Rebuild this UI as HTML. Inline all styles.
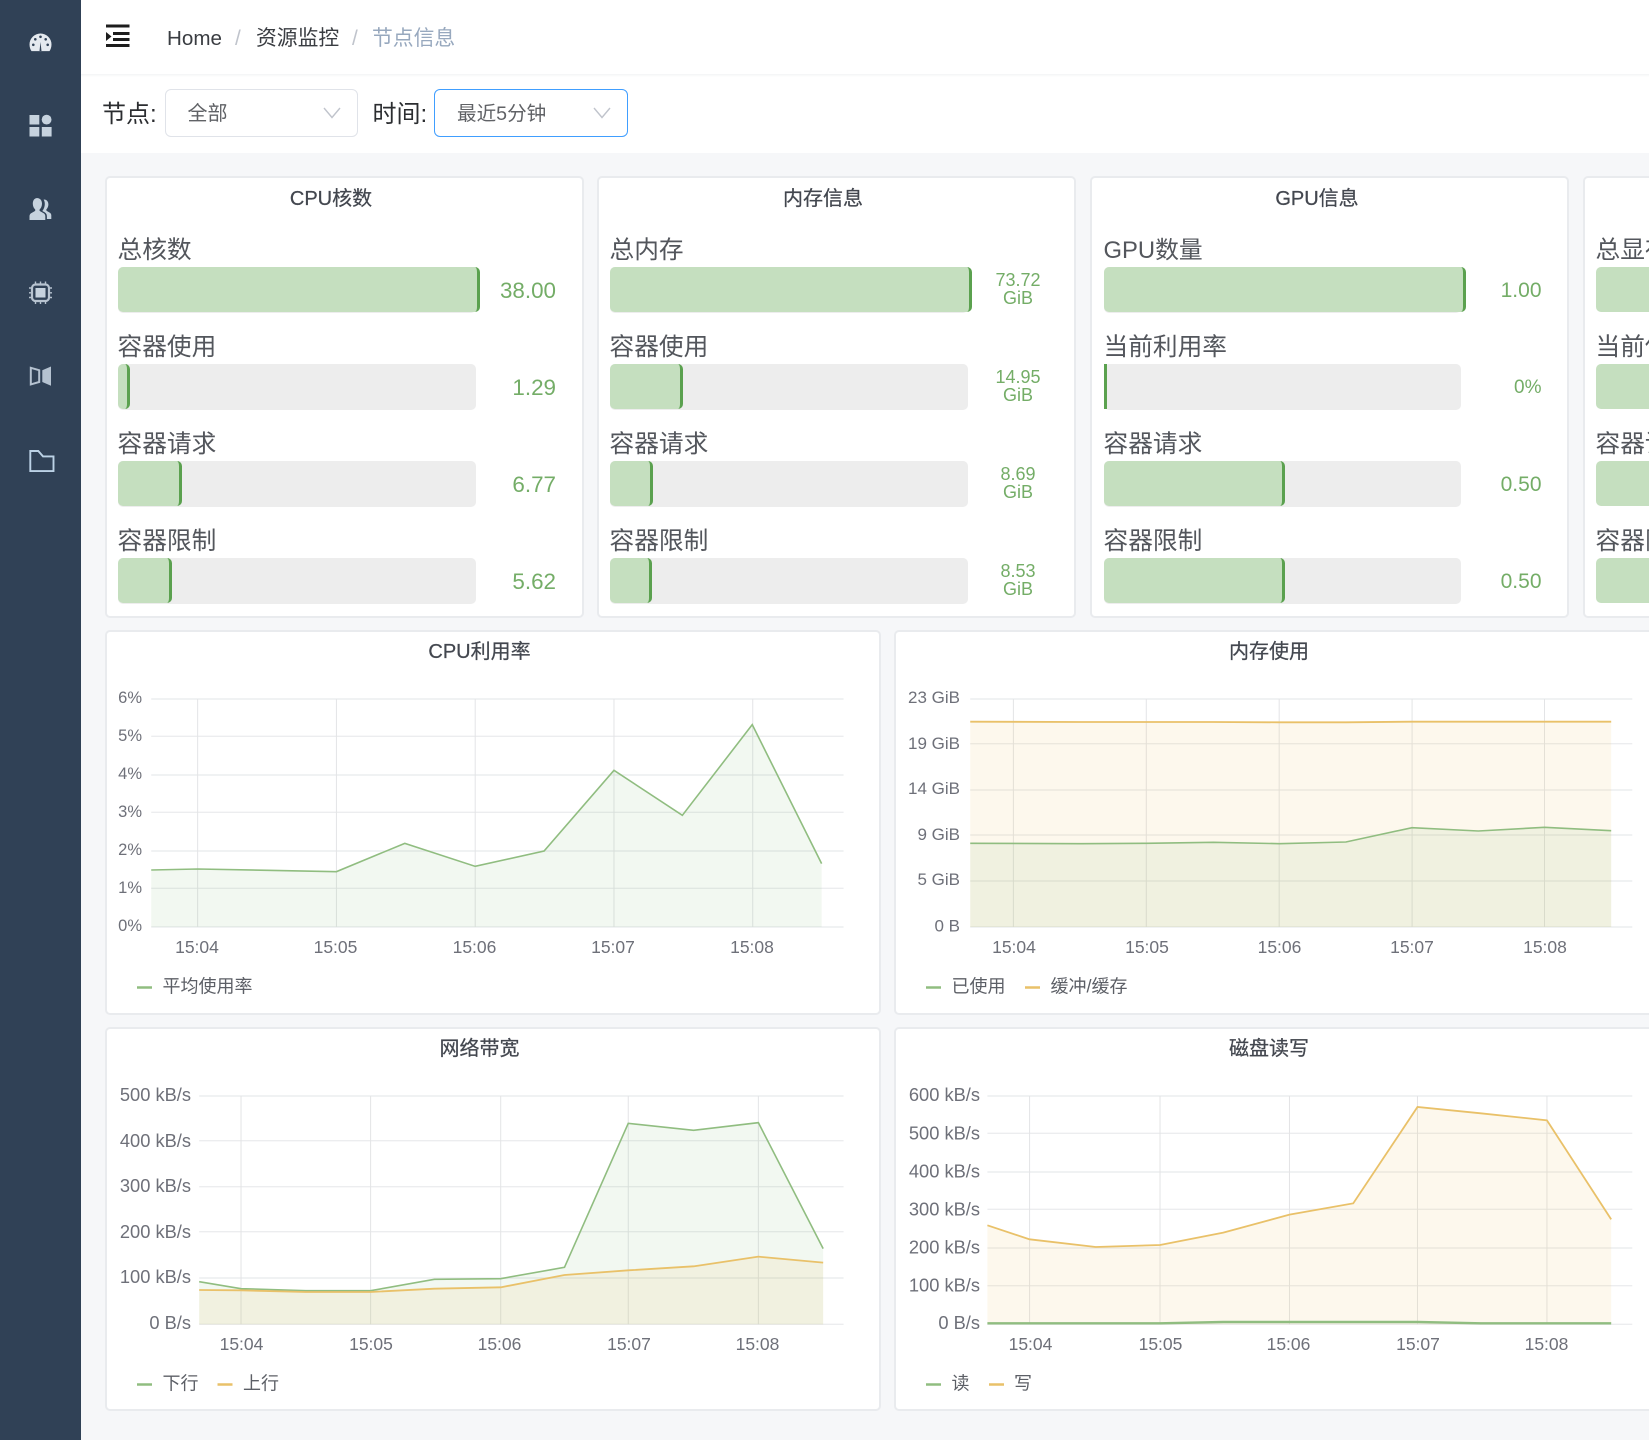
<!DOCTYPE html>
<html lang="zh-CN">
<head>
<meta charset="utf-8">
<title>节点信息</title>
<style>
*{box-sizing:border-box}
html,body{margin:0;padding:0;width:1649px;height:1440px;overflow:hidden;background:#f6f7f9;font-family:"Liberation Sans","Noto Sans CJK SC",sans-serif}
div{position:absolute}
.side{left:0;top:0;width:81px;height:1440px;background:#304156}
.bar{left:81px;top:0;width:1568px;height:153px;background:#fff}
.head{left:81px;top:74px;width:1568px;height:3px;background:linear-gradient(#f3f4f6,#fff)}
.bc{top:24px;height:30px;line-height:30px;font-size:20.8px;color:#3a3d42;white-space:nowrap}
.fl{top:97px;height:36px;line-height:36px;font-size:24px;color:#2b2d30;white-space:nowrap}
.sel{top:89px;width:193.5px;height:48px;background:#fff;border:1.5px solid #e0e3e9;border-radius:6px;line-height:49px;font-size:20px;color:#606266;padding-left:22px;white-space:nowrap}
.card{background:#fff;border:2px solid #e9ebee;border-radius:5px;overflow:hidden}
.big{top:176px;width:479px;height:441.5px}
.tt{height:30px;line-height:30px;font-size:20px;color:#43474f;text-align:center;white-space:nowrap;-webkit-text-stroke:.25px #43474f}
.l{height:36px;line-height:36px;font-size:24.7px;color:#53565c;white-space:nowrap}
.t{height:45.7px;background:#ededed;border-radius:5px}
.f{height:44.3px;background:#c5dfbf;border-right:3.3px solid #5ba14f;border-radius:5px}
.v{height:30px;line-height:30px;font-size:22.4px;color:#74ad67;text-align:right;white-space:nowrap}
.m{width:70px;font-size:18px;line-height:17.7px;color:#74ad67;text-align:center;white-space:nowrap}
.y1{top:233px}.y2{top:330px}.y3{top:427px}.y4{top:524px}
.a1{top:267.3px}.a2{top:364.3px}.a3{top:461.3px}.a4{top:558.3px}
.m1{top:272px}.m2{top:369px}.m3{top:466px}.m4{top:563px}
.v1{top:276px}.v2{top:373px}.v3{top:470px}.v4{top:567px}
svg.o{position:absolute;left:0;top:0}
svg.o text{font-family:"Liberation Sans","Noto Sans CJK SC",sans-serif;font-size:17.5px;fill:#6e7079;dominant-baseline:central}
svg.o text.lg{font-size:18px;fill:#5c5f66}
svg.o polyline,svg.o line{vector-effect:non-scaling-stroke}
.gh line{stroke:#ecedef;stroke-width:1.4}
.gv line{stroke:#e3e4e6;stroke-width:1}
.lg1{fill:none;stroke:#90bd80;stroke-width:1.6}
.lg2{fill:none;stroke:#e9c169;stroke-width:1.8}
.ag{fill:rgba(110,170,90,.085);stroke:none}
.ao{fill:rgba(238,190,90,.11);stroke:none}
</style>
</head>
<body>

<div class="side"></div>
<svg width="81" height="500" viewBox="0 0 81 500" style="position:absolute;left:0;top:0">
  <path d="M29.5 44.500a11 11 0 0 1 22 0c0 2.700-.8 4.900-2 6.600h-18c-1.200-1.700-2-3.900-2-6.600z" fill="#e4e9ef"/>
  <g fill="#304156"><circle cx="33.300" cy="44.800" r="1.300"/><circle cx="35.300" cy="39.300" r="1.300"/><circle cx="40.500" cy="36.800" r="1.300"/><circle cx="45.700" cy="39.300" r="1.300"/><circle cx="47.700" cy="44.800" r="1.300"/><path d="M39.500 51l1-9 1 9z"/></g>
  <g fill="#c6d2de"><rect x="29.500" y="115" width="9.800" height="9.500"/><circle cx="46.600" cy="119.600" r="4.900"/><rect x="29.500" y="127" width="9.800" height="9.500"/><rect x="41.800" y="127" width="9.800" height="9.500"/></g>
  <g fill="#c6d2de"><path d="M36.800 198c3.400 0 5.200 2.600 5.200 5.700 0 2.300-1 4.400-2.200 5.600-.5.600-.4 1.600.4 2l3.300 1.800c1.100.6 1.800 1.700 1.800 3V220H29.500v-3.900c0-1.300.7-2.400 1.800-3l3.300-1.800c.8-.4.900-1.400.4-2-1.200-1.200-2.200-3.300-2.200-5.600 0-3.100 1.600-5.700 4.500-5.700z"/><path d="M44 199.500c2.900 0 4.400 2.300 4.400 4.900 0 2-.9 3.800-1.900 4.900-.4.500-.2 1.300.4 1.700l2.800 1.600c1 .6 1.600 1.500 1.600 2.700V219h-4.400v-2.800c0-1.700-.9-3.100-2.300-3.900l-2.300-1.300c1.500-1.800 2.500-4.400 2.500-7 0-1.700-.4-3.200-1.100-4.400.1-.1.200-.1.300-.1z"/></g>
  <g fill="none" stroke="#c6d2de" opacity=".9"><rect x="32" y="284.500" width="17" height="16.500" rx="3.500" stroke-width="2.200"/><path d="M35.500 281.500v2.500M40.500 281.500v2.500M45.500 281.500v2.500M35.500 301.500v2.500M40.500 301.500v2.500M45.500 301.500v2.500M29 288h2.500M29 292.800h2.500M29 297.500h2.500M49.500 288h2.500M49.500 292.800h2.500M49.500 297.500h2.500" stroke-width="1.400"/></g>
  <rect x="35.500" y="288" width="10" height="9.500" fill="#c6d2de"/>
  <path d="M30.800 367.800l8.400 2.400v11.800l-8.400 2.400z" fill="none" stroke="#b5c2d0" stroke-width="2"/>
  <path d="M42.300 370.200l8.700-3.700v19.200l-8.700-3.700z" fill="#b5c2d0"/>
  <path d="M30.300 451h8l4.700 5.400h10.500v14.700H30.300z" fill="none" stroke="#bcd2e6" stroke-width="1.900"/>
</svg>

<div class="bar"></div>
<div class="head"></div>

<svg width="30" height="30" viewBox="0 0 30 30" style="position:absolute;left:103px;top:21px">
  <path d="M3 5h23.500M10 12.500h16.500M10 18.500h16.500M3 24.500h23.500" stroke="#1d1d1d" stroke-width="2.900" fill="none"/>
  <path d="M3 11l5.500 4.500L3 20z" fill="#1d1d1d"/>
</svg>
<div class="bc" style="left:167px;font-size:20.600px">Home</div>
<div class="bc" style="left:235px;color:#c0c4cc">/</div>
<div class="bc" style="left:256px">资源监控</div>
<div class="bc" style="left:352px;color:#c0c4cc">/</div>
<div class="bc" style="left:372px;color:#97a8be">节点信息</div>

<div class="fl" style="left:102px">节点:</div>
<div class="sel" style="left:164.500px">全部</div>
<div class="fl" style="left:372.500px">时间:</div>
<div class="sel" style="left:434px;border-color:#409eff;border-width:1.7px;font-size:19.600px">最近5分钟</div>
<svg width="640" height="150" viewBox="0 0 640 150" style="position:absolute;left:0;top:0">
  <path d="M324 108l8 9.500 8-9.500M594 108l8 9.500 8-9.500" fill="none" stroke="#c0c4cc" stroke-width="1.400"/>
</svg>

<!-- CPU card -->
<div class="card big" style="left:105px"></div>
<div class="tt" style="left:105px;width:452px;top:183.500px">CPU核数</div>
<div class="l y1" style="left:117.500px">总核数</div><div class="t a1" style="left:118px;width:357.700px"></div><div class="f a1" style="left:118px;width:362px"></div><div class="v v1" style="left:456px;width:100px">38.00</div>
<div class="l y2" style="left:117.500px">容器使用</div><div class="t a2" style="left:118px;width:357.700px"></div><div class="f a2" style="left:118px;width:11.700px"></div><div class="v v2" style="left:456px;width:100px">1.29</div>
<div class="l y3" style="left:117.500px">容器请求</div><div class="t a3" style="left:118px;width:357.700px"></div><div class="f a3" style="left:118px;width:64px"></div><div class="v v3" style="left:456px;width:100px">6.77</div>
<div class="l y4" style="left:117.500px">容器限制</div><div class="t a4" style="left:118px;width:357.700px"></div><div class="f a4" style="left:118px;width:53.700px"></div><div class="v v4" style="left:456px;width:100px">5.62</div>

<!-- Memory card -->
<div class="card big" style="left:597px"></div>
<div class="tt" style="left:597px;width:452px;top:183.500px">内存信息</div>
<div class="l y1" style="left:609.500px">总内存</div><div class="t a1" style="left:610px;width:357.700px"></div><div class="f a1" style="left:610px;width:362px"></div><div class="m m1" style="left:983px">73.72<br>GiB</div>
<div class="l y2" style="left:609.500px">容器使用</div><div class="t a2" style="left:610px;width:357.700px"></div><div class="f a2" style="left:610px;width:72.600px"></div><div class="m m2" style="left:983px">14.95<br>GiB</div>
<div class="l y3" style="left:609.500px">容器请求</div><div class="t a3" style="left:610px;width:357.700px"></div><div class="f a3" style="left:610px;width:43px"></div><div class="m m3" style="left:983px">8.69<br>GiB</div>
<div class="l y4" style="left:609.500px">容器限制</div><div class="t a4" style="left:610px;width:357.700px"></div><div class="f a4" style="left:610px;width:42px"></div><div class="m m4" style="left:983px">8.53<br>GiB</div>

<!-- GPU card -->
<div class="card big" style="left:1090px"></div>
<div class="tt" style="left:1091px;width:452px;top:183.500px">GPU信息</div>
<div class="l y1" style="left:1103.500px;font-size:23.800px">GPU数量</div><div class="t a1" style="left:1103.500px;width:357.700px"></div><div class="f a1" style="left:1103.500px;width:362px"></div><div class="v v1" style="left:1441.500px;width:100px;font-size:21px">1.00</div>
<div class="l y2" style="left:1103.500px">当前利用率</div><div class="t a2" style="left:1103.500px;width:357.700px"></div><div class="f a2" style="left:1103.500px;width:3px;border-radius:0;background:#5ba14f;border:0"></div><div class="v v2" style="left:1441.500px;width:100px;font-size:19px">0%</div>
<div class="l y3" style="left:1103.500px">容器请求</div><div class="t a3" style="left:1103.500px;width:357.700px"></div><div class="f a3" style="left:1103.500px;width:181.600px"></div><div class="v v3" style="left:1441.500px;width:100px;font-size:21px">0.50</div>
<div class="l y4" style="left:1103.500px">容器限制</div><div class="t a4" style="left:1103.500px;width:357.700px"></div><div class="f a4" style="left:1103.500px;width:181.600px"></div><div class="v v4" style="left:1441.500px;width:100px;font-size:21px">0.50</div>

<!-- 4th card -->
<div class="card big" style="left:1583px"></div>
<div class="l y1" style="left:1595.500px">总显存</div><div class="f a1" style="left:1595.500px;width:362px"></div>
<div class="l y2" style="left:1595.500px">当前使用率</div><div class="f a2" style="left:1595.500px;width:362px"></div>
<div class="l y3" style="left:1595.500px">容器请求</div><div class="f a3" style="left:1595.500px;width:362px"></div>
<div class="l y4" style="left:1595.500px">容器限制</div><div class="f a4" style="left:1595.500px;width:362px"></div>

<!-- chart cards -->
<div class="card" style="left:104.500px;top:630px;width:776.500px;height:384.500px"></div>
<div class="card" style="left:893.500px;top:630px;width:776px;height:384.500px"></div>
<div class="card" style="left:104.500px;top:1027px;width:776.500px;height:384px"></div>
<div class="card" style="left:893.500px;top:1027px;width:776px;height:384px"></div>
<div class="tt" style="left:279.500px;width:400px;top:637px">CPU利用率</div>
<div class="tt" style="left:1069px;width:400px;top:637px">内存使用</div>
<div class="tt" style="left:279.500px;width:400px;top:1033.500px">网络带宽</div>
<div class="tt" style="left:1069px;width:400px;top:1033.500px">磁盘读写</div>

<svg class="o" width="1649" height="1440" viewBox="0 0 1649 1440">
  <!-- chart 1 -->
  <g transform="translate(90,620) scale(.5102,.33333)">
    <g class="gh"><line x1="120" x2="1477" y1="237" y2="237"/><line x1="120" x2="1477" y1="349" y2="349"/><line x1="120" x2="1477" y1="465" y2="465"/><line x1="120" x2="1477" y1="577" y2="577"/><line x1="120" x2="1477" y1="693" y2="693"/><line x1="120" x2="1477" y1="805" y2="805"/><line x1="120" x2="1477" y1="921" y2="921"/></g>
    <g class="gv"><line x1="211" x2="211" y1="237" y2="921"/><line x1="483" x2="483" y1="237" y2="921"/><line x1="755" x2="755" y1="237" y2="921"/><line x1="1027" x2="1027" y1="237" y2="921"/><line x1="1299" x2="1299" y1="237" y2="921"/></g>
    <polygon class="ag" points="120,750 211,747 347,751 483,755 617,670 755,739 890,693 1027,451 1161,586 1298,314 1434,731 1434,921 120,921"/>
    <polyline class="lg1" points="120,750 211,747 347,751 483,755 617,670 755,739 890,693 1027,451 1161,586 1298,314 1434,731"/>
  </g>
  <g text-anchor="end" style="font-size:16.500px"><text x="142" y="698" style="font-size:16.500px">6%</text><text x="142" y="736" style="font-size:16.500px">5%</text><text x="142" y="774" style="font-size:16.500px">4%</text><text x="142" y="812" style="font-size:16.500px">3%</text><text x="142" y="850" style="font-size:16.500px">2%</text><text x="142" y="888" style="font-size:16.500px">1%</text><text x="142" y="926" style="font-size:16.500px">0%</text></g>
  <g text-anchor="middle"><text x="197" y="947">15:04</text><text x="335.500" y="947">15:05</text><text x="474.500" y="947">15:06</text><text x="613" y="947">15:07</text><text x="752" y="947">15:08</text></g>
  <line x1="137" x2="152" y1="987.500" y2="987.500" stroke="#90bd80" stroke-width="2.500"/>
  <text class="lg" x="162.500" y="986.500">平均使用率</text>

  <!-- chart 2 -->
  <g transform="translate(880,620) scale(.4904,.33333)">
    <g class="gh"><line x1="184" x2="1534" y1="237" y2="237"/><line x1="184" x2="1534" y1="371" y2="371"/><line x1="184" x2="1534" y1="510" y2="510"/><line x1="184" x2="1534" y1="645" y2="645"/><line x1="184" x2="1534" y1="783" y2="783"/><line x1="184" x2="1534" y1="921" y2="921"/></g>
    <g class="gv"><line x1="272" x2="272" y1="237" y2="921"/><line x1="543" x2="543" y1="237" y2="921"/><line x1="814" x2="814" y1="237" y2="921"/><line x1="1085" x2="1085" y1="237" y2="921"/><line x1="1355" x2="1355" y1="237" y2="921"/></g>
    <polygon class="ao" points="184,305 410,306 680,306 814,307 950,307 1085,305 1491,305 1491,921 184,921"/>
    <polygon class="ag" points="184,670 410,671 543,670 680,667 814,671 950,666 1085,623 1220,633 1355,622 1491,632 1491,921 184,921"/>
    <polyline class="lg2" points="184,305 410,306 680,306 814,307 950,307 1085,305 1491,305"/>
    <polyline class="lg1" points="184,670 410,671 543,670 680,667 814,671 950,666 1085,623 1220,633 1355,622 1491,632"/>
  </g>
  <g text-anchor="end"><text x="960" y="697.500" style="font-size:17px">23 GiB</text><text x="960" y="743.500" style="font-size:17px">19 GiB</text><text x="960" y="788.500" style="font-size:17px">14 GiB</text><text x="960" y="834.500" style="font-size:17px">9 GiB</text><text x="960" y="879.500" style="font-size:17px">5 GiB</text><text x="960" y="926" style="font-size:17px">0 B</text></g>
  <g text-anchor="middle"><text x="1014" y="947">15:04</text><text x="1147" y="947">15:05</text><text x="1279.500" y="947">15:06</text><text x="1412" y="947">15:07</text><text x="1545" y="947">15:08</text></g>
  <line x1="926" x2="941" y1="987.500" y2="987.500" stroke="#90bd80" stroke-width="2.500"/>
  <text class="lg" x="951.500" y="986.500">已使用</text>
  <line x1="1025" x2="1040" y1="987.500" y2="987.500" stroke="#e9c169" stroke-width="2.500"/>
  <text class="lg" x="1050.500" y="986.500">缓冲/缓存</text>

  <!-- chart 3 -->
  <g transform="translate(90,1020) scale(.5102,.33333)">
    <g class="gh"><line x1="214" x2="1477" y1="228" y2="228"/><line x1="214" x2="1477" y1="362" y2="362"/><line x1="214" x2="1477" y1="500" y2="500"/><line x1="214" x2="1477" y1="635" y2="635"/><line x1="214" x2="1477" y1="774" y2="774"/><line x1="214" x2="1477" y1="913" y2="913"/></g>
    <g class="gv"><line x1="296" x2="296" y1="228" y2="913"/><line x1="550" x2="550" y1="228" y2="913"/><line x1="805" x2="805" y1="228" y2="913"/><line x1="1055" x2="1055" y1="228" y2="913"/><line x1="1310" x2="1310" y1="228" y2="913"/></g>
    <polygon class="ag" points="214,785 296,806 423,812 550,812 675,778 805,776 930,742 1055,310 1183,331 1310,308 1437,686 1437,913 214,913"/>
    <polygon class="ao" points="214,810 296,811 423,816 550,816 675,806 805,802 930,765 1055,751 1183,739 1310,710 1437,728 1437,913 214,913"/>
    <polyline class="lg1" points="214,785 296,806 423,812 550,812 675,778 805,776 930,742 1055,310 1183,331 1310,308 1437,686"/>
    <polyline class="lg2" points="214,810 296,811 423,816 550,816 675,806 805,802 930,765 1055,751 1183,739 1310,710 1437,728"/>
  </g>
  <g text-anchor="end"><text x="191" y="1094.500" style="font-size:18.300px">500 kB/s</text><text x="191" y="1140.500" style="font-size:18.300px">400 kB/s</text><text x="191" y="1185.500" style="font-size:18.300px">300 kB/s</text><text x="191" y="1231.500" style="font-size:18.300px">200 kB/s</text><text x="191" y="1276.500" style="font-size:18.300px">100 kB/s</text><text x="191" y="1322.500" style="font-size:18.300px">0 B/s</text></g>
  <g text-anchor="middle"><text x="241.500" y="1344">15:04</text><text x="371" y="1344">15:05</text><text x="499.500" y="1344">15:06</text><text x="629" y="1344">15:07</text><text x="757.500" y="1344">15:08</text></g>
  <line x1="137" x2="152" y1="1384.500" y2="1384.500" stroke="#90bd80" stroke-width="2.500"/>
  <text class="lg" x="162.500" y="1383.500">下行</text>
  <line x1="217.500" x2="232.500" y1="1384.500" y2="1384.500" stroke="#e9c169" stroke-width="2.500"/>
  <text class="lg" x="243" y="1383.500">上行</text>

  <!-- chart 4 -->
  <g transform="translate(880,1020) scale(.4904,.33333)">
    <g class="gh"><line x1="219" x2="1534" y1="228" y2="228"/><line x1="219" x2="1534" y1="340" y2="340"/><line x1="219" x2="1534" y1="456" y2="456"/><line x1="219" x2="1534" y1="568" y2="568"/><line x1="219" x2="1534" y1="684" y2="684"/><line x1="219" x2="1534" y1="797" y2="797"/><line x1="219" x2="1534" y1="913" y2="913"/></g>
    <g class="gv"><line x1="305" x2="305" y1="228" y2="913"/><line x1="571" x2="571" y1="228" y2="913"/><line x1="835" x2="835" y1="228" y2="913"/><line x1="1096" x2="1096" y1="228" y2="913"/><line x1="1360" x2="1360" y1="228" y2="913"/></g>
    <polygon class="ao" points="219,616 305,658 440,681 571,675 700,638 835,584 965,550 1096,261 1225,280 1360,301 1491,598 1491,913 219,913"/>
    <polyline class="lg2" points="219,616 305,658 440,681 571,675 700,638 835,584 965,550 1096,261 1225,280 1360,301 1491,598"/>
    <polyline class="lg1" style="stroke-width:2.400" points="219,910 571,910 700,906 1096,906 1225,910 1491,910"/>
  </g>
  <g text-anchor="end"><text x="980" y="1094.500" style="font-size:18.300px">600 kB/s</text><text x="980" y="1133" style="font-size:18.300px">500 kB/s</text><text x="980" y="1171" style="font-size:18.300px">400 kB/s</text><text x="980" y="1209" style="font-size:18.300px">300 kB/s</text><text x="980" y="1247" style="font-size:18.300px">200 kB/s</text><text x="980" y="1285" style="font-size:18.300px">100 kB/s</text><text x="980" y="1322.500" style="font-size:18.300px">0 B/s</text></g>
  <g text-anchor="middle"><text x="1030.500" y="1344">15:04</text><text x="1160.500" y="1344">15:05</text><text x="1288.500" y="1344">15:06</text><text x="1418" y="1344">15:07</text><text x="1546.500" y="1344">15:08</text></g>
  <line x1="926" x2="941" y1="1384.500" y2="1384.500" stroke="#90bd80" stroke-width="2.500"/>
  <text class="lg" x="951.500" y="1383.500">读</text>
  <line x1="989" x2="1004" y1="1384.500" y2="1384.500" stroke="#e9c169" stroke-width="2.500"/>
  <text class="lg" x="1014" y="1383.500">写</text>
</svg>

</body>
</html>
